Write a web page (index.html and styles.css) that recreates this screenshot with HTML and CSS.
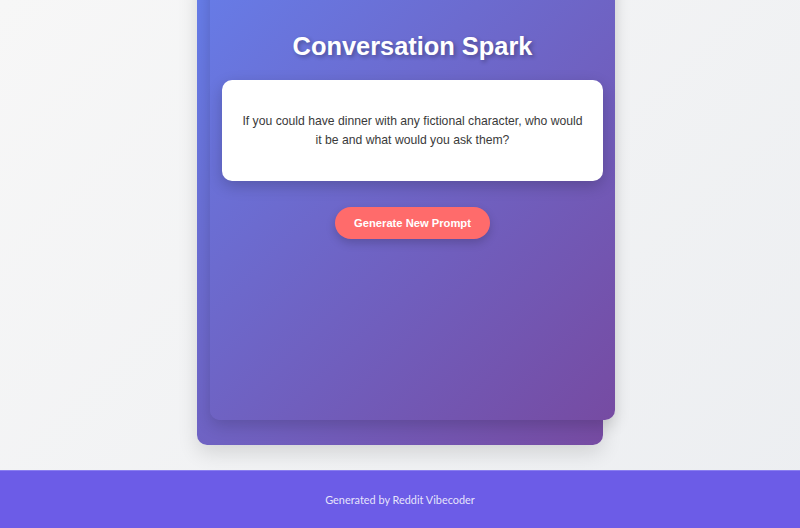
FILE: index.html
```html
<!DOCTYPE html>
<html lang="en">
<head>
<meta charset="utf-8">
<title>Conversation Spark</title>
<link rel="stylesheet" href="styles.css">
</head>
<body>
<main class="main">
  <div class="stack">
    <div class="card">
      <h1 class="title">Conversation Spark</h1>
      <div class="prompt">
        <p class="prompt-text">If you could have dinner with any fictional character, who would it be and what would you ask them?</p>
      </div>
      <button class="btn" type="button">Generate New Prompt</button>
    </div>
  </div>
</main>
<footer class="footer">Generated by Reddit Vibecoder</footer>
</body>
</html>
```
FILE: styles.css
```css
html, body { margin: 0; padding: 0; }
body {
  min-height: 100vh;
  display: flex;
  flex-direction: column;
  background: linear-gradient(135deg, #f7f7f7 0%, #eceef1 100%);
  font-family: "Liberation Sans", Arial, sans-serif;
  overflow: hidden;
}
.main {
  flex: 1;
  display: flex;
  justify-content: center;
  align-items: flex-start;
  padding-bottom: 25px;
}
.stack {
  position: relative;
  width: 406px;
  height: 475px;
  margin-top: -30px;
  border-radius: 10px;
  background: linear-gradient(135deg, #667eea 0%, #764ba2 100%);
  box-shadow: 0 8px 20px rgba(0, 0, 0, 0.12);
}
.card {
  position: absolute;
  left: 13px;
  top: -25px;
  width: 405px;
  height: 475px;
  box-sizing: border-box;
  border-radius: 10px;
  background: linear-gradient(135deg, #667eea 0%, #764ba2 100%);
  box-shadow: 0 6px 16px rgba(0, 0, 0, 0.16);
  padding: 84px 12px 0;
  display: flex;
  flex-direction: column;
  align-items: center;
}
.title {
  margin: 0;
  color: #fff;
  font-size: 25.4px;
  font-weight: 700;
  line-height: 34px;
  text-shadow: 2px 2px 4px rgba(0, 0, 0, 0.3);
}
.prompt {
  margin-top: 17px;
  align-self: stretch;
  background: #fff;
  border-radius: 10px;
  height: 101px;
  box-sizing: border-box;
  padding: 0 18px;
  display: flex;
  align-items: center;
  justify-content: center;
  box-shadow: 0 5px 15px rgba(0, 0, 0, 0.2);
}
.prompt-text {
  margin: 0;
  color: #3a3a3a;
  font-size: 12.2px;
  line-height: 19px;
  text-align: center;
}
.btn {
  margin-top: 26px;
  width: 155px;
  height: 32px;
  border: 0;
  border-radius: 16px;
  background: #ff6b6b;
  color: #fff;
  font-family: "Liberation Sans", Arial, sans-serif;
  font-size: 11.2px;
  font-weight: 700;
  box-shadow: 0 4px 10px rgba(0, 0, 0, 0.18);
  padding: 0;
}
.footer {
  height: 58px;
  background: #6c5ce7;
  border-top: 1px solid #8a7ef0;
  box-sizing: border-box;
  display: flex;
  align-items: center;
  justify-content: center;
  color: rgba(255, 255, 255, 0.85);
  font-family: "Lato", "Noto Sans", sans-serif;
  font-size: 10.9px;
}
```
